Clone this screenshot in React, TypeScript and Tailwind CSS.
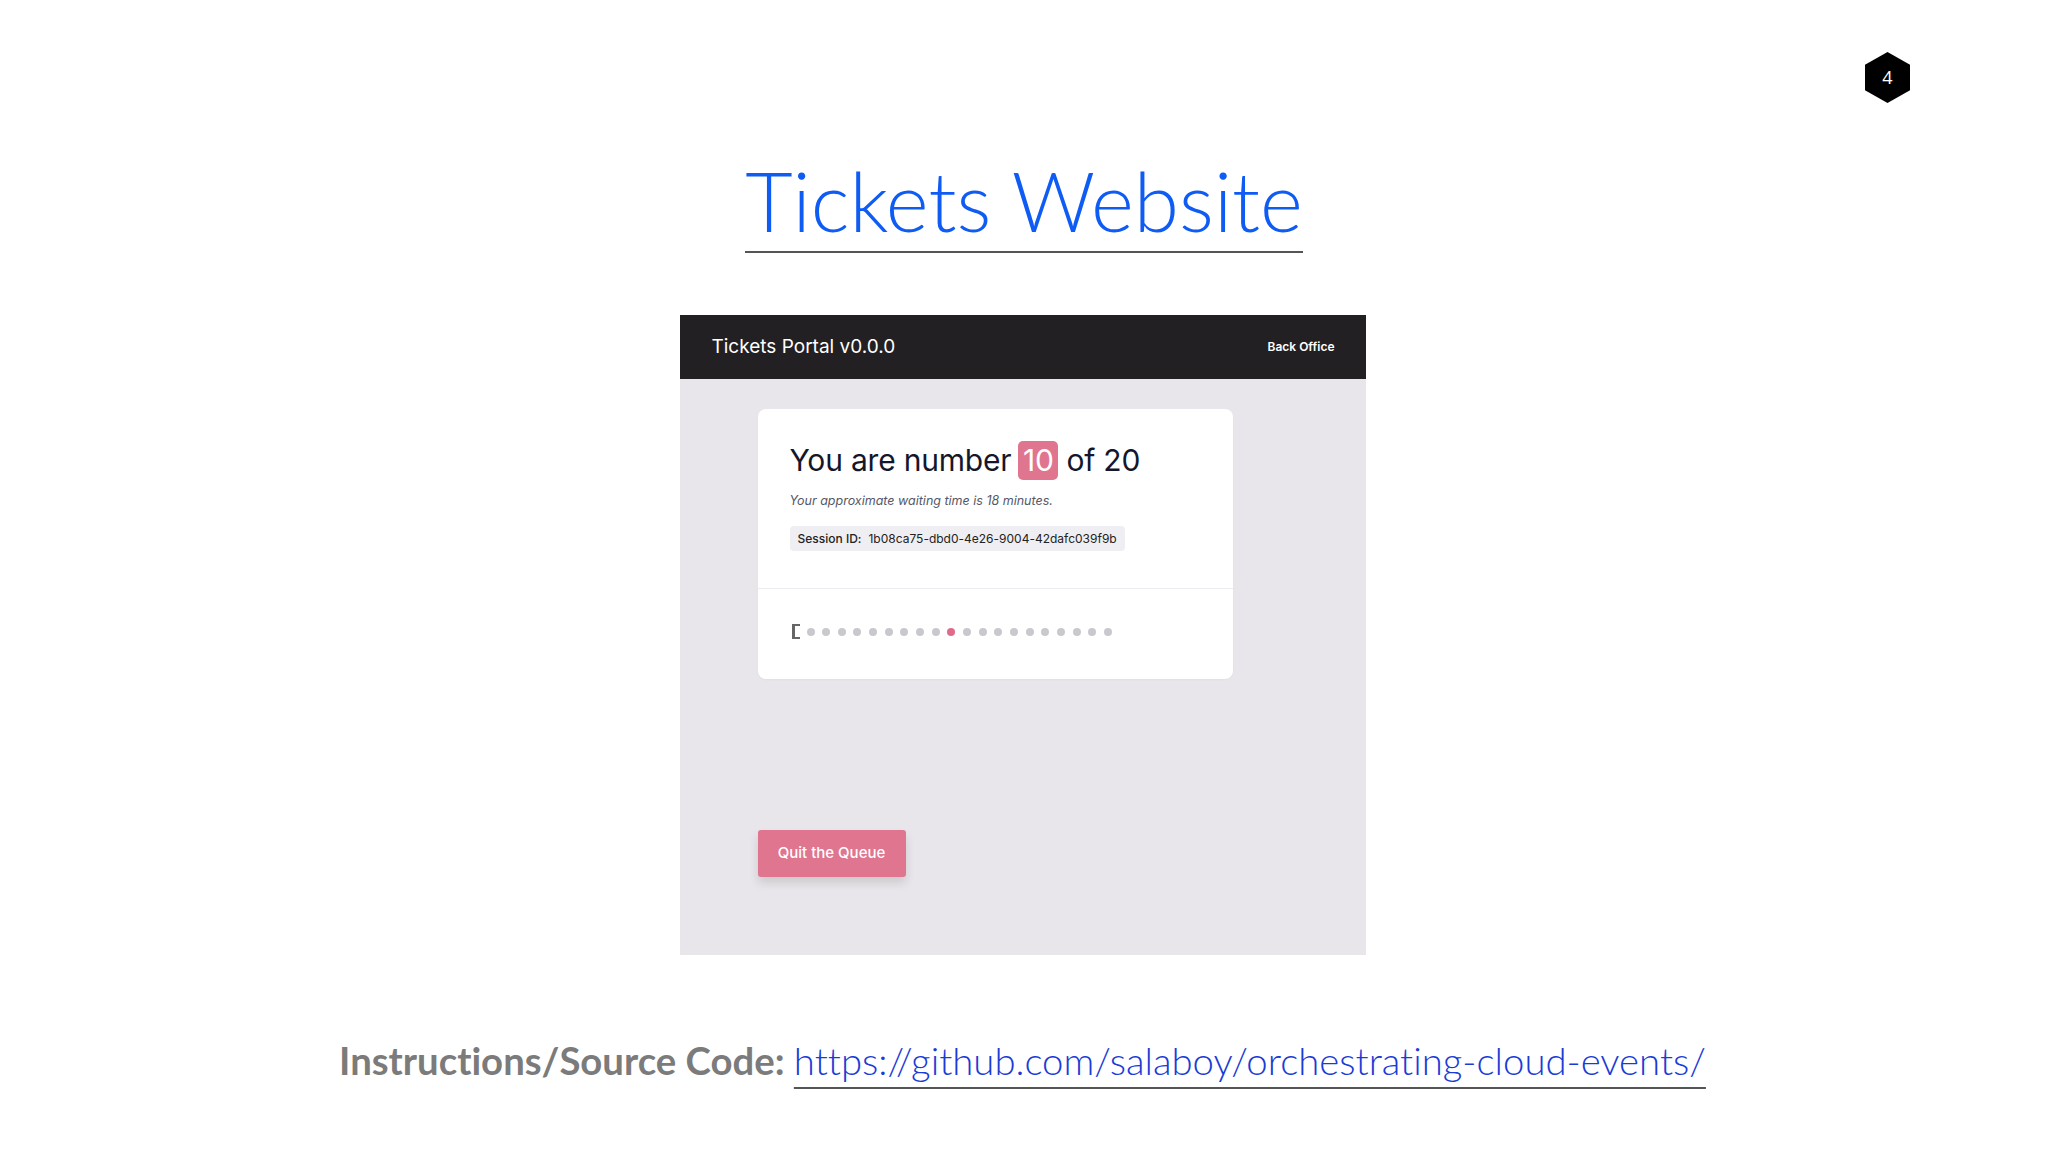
import React from "react";

const dots = Array.from({ length: 20 }, (_, i) => i);

function Hexagon() {
    return (
        <div className="absolute left-[1865px] top-[52px] w-[45px] h-[51px] flex items-center justify-center">
            <svg width="45" height="51" viewBox="0 0 45 51" className="absolute inset-0">
                <polygon points="22.5,0 45,12.75 45,38.25 22.5,51 0,38.25 0,12.75" fill="#000" />
            </svg>
            <span className="relative text-white text-[18px] font-['Open_Sans',sans-serif]">4</span>
        </div>
    );
}

function QueueCard() {
    return (
        <div className="w-[475px] bg-white rounded-lg shadow-[0_1px_2px_rgba(0,0,0,0.03)]">
            <div className="px-8 pt-[31px] pb-[37px] border-b border-[#ececf0]">
                <h2 className="flex items-center text-[30px] leading-[40px] text-[#14172b] tracking-[-0.2px]">
                    <span>You are number</span>
                    <span className="ml-[7px] mr-[8px] h-[39px] w-[40px] flex items-center justify-center rounded-[5px] bg-[#e07590] text-white">10</span>
                    <span>of 20</span>
                </h2>
                <p className="mt-[13px] text-[12.5px] leading-4 italic text-[#555866]">Your approximate waiting time is 18 minutes.</p>
                <div className="mt-[17px] inline-flex items-center h-[25px] px-2 rounded-sm bg-[#efeff3] text-[12px] text-[#222]">
                    <span className="font-medium">Session ID:</span>
                    <span className="ml-[7px]">1b08ca75-dbd0-4e26-9004-42dafc039f9b</span>
                </div>
            </div>
            <div className="h-[90px] flex items-center pl-[34px] pb-[5px]">
                <span className="w-[8px] h-[15px] border-l-[3px] border-t-2 border-b-2 border-[#666]" />
                <div className="ml-[7px] flex items-center gap-[7.67px]">
                    {dots.map((i) => (
                        <span key={i} className={i === 9 ? "w-2 h-2 rounded-full bg-[#e06a8a]" : "w-2 h-2 rounded-full bg-[#c9c8cd]"} />
                    ))}
                </div>
            </div>
        </div>
    );
}

export default function App() {
    return (
        <div className="relative w-full h-[1152px] bg-white flex flex-col items-center font-['Lato',sans-serif] [font-variant-ligatures:none]">
            <Hexagon />

            <h1 className="mt-[159px] text-[82px] leading-none font-light text-[#0f5cf5] pb-[10px] border-b-2 border-[#555]">
                Tickets Website
            </h1>

            {/* screenshot of the portal */}
            <div className="mt-[62px] mr-[3px] w-[686px] h-[640px] flex flex-col bg-[#e8e6ea] font-['Inter',sans-serif]">
                <div className="h-[64px] shrink-0 flex items-center justify-between pl-[32px] pr-[31px] bg-[#222022]">
                    <span className="text-[19px] text-white">Tickets Portal v0.0.0</span>
                    <span className="text-[12px] font-semibold text-white">Back Office</span>
                </div>
                <div className="flex flex-col pl-[78px] pt-[30px]">
                    <QueueCard />
                    <button className="mt-[151px] w-[148px] h-[47px] rounded-[3px] bg-[#e07590] text-white text-[15px] font-medium shadow-[0_6px_10px_rgba(0,0,0,0.12)]">
                        Quit the Queue
                    </button>
                </div>
            </div>

            <p className="mt-[86px] mr-[3px] text-[38.3px] leading-none text-center">
                <span className="font-bold text-[#7b7b7b]">Instructions/Source Code: </span>
                <span className="font-light text-[#1a3bd6] underline decoration-2 decoration-[#555] underline-offset-[12px]">
                    https://github.com/salaboy/orchestrating-cloud-events/
                </span>
            </p>
        </div>
    );
}
